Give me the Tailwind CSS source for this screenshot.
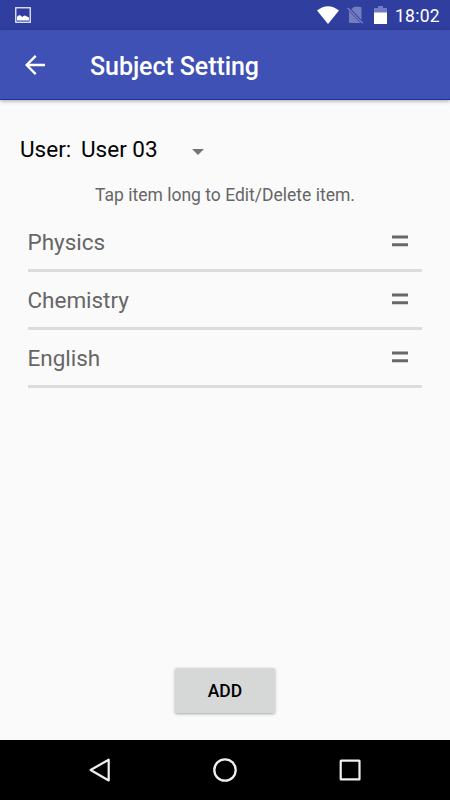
<!DOCTYPE html>
<html lang="en">
<head>
<meta charset="utf-8">
<title>Subject Setting</title>
<script src="https://cdn.jsdelivr.net/npm/@tailwindcss/browser@4"></script>
</head>
<body class="w-[450px] h-[800px] overflow-hidden bg-[#fafafa] font-[Roboto,sans-serif] flex flex-col">
  <div class="h-[30px] shrink-0 bg-[#303f9f] flex items-center text-white">
    <svg class="ml-[15px] w-4 h-4" viewBox="0 0 16 16"><rect x=".75" y=".75" width="14.5" height="14.5" fill="none" stroke="#fff" stroke-opacity=".9" stroke-width="1.3"/><path d="M2 13.500V10q1.500-2.500 3.500-1.500L7.500 10Q9 7.500 11 9l3 1.500v3z" fill="#fff"/></svg>
    <svg class="ml-auto w-[22px] h-[18px]" viewBox="0 0 22 18"><path d="M0 4.500Q11-4 22 4.500L11 18z" fill="#fff"/></svg>
    <svg class="ml-[8px] w-[17px] h-[18px]" viewBox="0 0 17 18"><path d="M4.300 3.300L7 .8h6q1.500 0 1.500 1.500v11.500zM2 5l11.500 12H3.500Q2 17 2 15.500z" fill="#fff" fill-opacity=".33"/><path d="M.7 2l15 15.200" stroke="#fff" stroke-opacity=".33" stroke-width="1.500"/></svg>
    <svg class="ml-[10px] w-[13px] h-[18px]" viewBox="0 0 13 18"><path d="M0 7V2h4V0h5v2h4v5z" fill="#fff" fill-opacity=".32"/><path d="M0 6.500h13V18H0z" fill="#fff"/></svg>
    <span class="ml-[8px] mr-[10px] w-[45px] whitespace-nowrap text-[17.5px] leading-[30px] pt-[2px] tracking-[0.25px]">18:02</span>
  </div>
  <div class="relative h-[70px] shrink-0 bg-[#3f51b5] border-b border-[#17319f] shadow-[0_1px_4px_rgba(0,0,0,0.35)] flex items-center text-white">
    <svg class="ml-[25px] w-5 h-5" viewBox="0 0 20 20"><path d="M20 10H2M10.700 .9L1.600 10l9.100 9.100" fill="none" stroke="#fff" stroke-width="2.400"/></svg>
    <h1 class="ml-[45px] pt-[5px] text-[25px] leading-[30px] font-medium tracking-[-0.07px]">Subject Setting</h1>
  </div>
  <main class="flex-1 flex flex-col">
    <div class="mt-[34px] ml-5 h-[30px] flex items-center text-[22.5px] leading-[30px] text-black">
      <span class="w-[61px]">User:</span>
      <span class="w-[110.5px]">User 03</span>
      <svg class="mt-[6px] w-3 h-[6px]" viewBox="0 0 12 6"><path d="M0 0h12L6 6z" fill="#757575"/></svg>
    </div>
    <p class="mt-[20px] h-[22px] text-center text-[17.5px] leading-[22px] text-[#666]">Tap item long to Edit/Delete item.</p>
    <ul class="mt-[8px] mx-[27.5px] w-[394.5px] text-[22.5px] tracking-[-0.03px] text-[#666]">
      <li class="h-[58px] border-b-3 border-[#dcdcdc] flex items-center justify-between"><span class="leading-[55px] pt-px">Physics</span><svg class="mr-[14px] mb-px w-4 h-3" viewBox="0 0 16 12"><path d="M0 2h16M0 9.700h16" stroke="#686868" stroke-width="3"/></svg></li>
      <li class="h-[58px] border-b-3 border-[#dcdcdc] flex items-center justify-between"><span class="leading-[55px] pt-px">Chemistry</span><svg class="mr-[14px] mb-px w-4 h-3" viewBox="0 0 16 12"><path d="M0 2h16M0 9.700h16" stroke="#686868" stroke-width="3"/></svg></li>
      <li class="h-[58px] border-b-3 border-[#dcdcdc] flex items-center justify-between"><span class="leading-[55px] pt-px">English</span><svg class="mr-[14px] mb-px w-4 h-3" viewBox="0 0 16 12"><path d="M0 2h16M0 9.700h16" stroke="#686868" stroke-width="3"/></svg></li>
    </ul>
    <button class="mt-auto mb-[27px] mx-auto w-[100px] h-[45px] rounded-[2px] bg-[#d6d7d7] shadow-[0_1px_3px_rgba(0,0,0,0.35)] pt-px text-[17.5px] leading-[45px] font-medium text-black">ADD</button>
  </main>
  <nav class="h-[60px] shrink-0 bg-black flex items-center justify-center gap-[101px]">
    <svg class="w-6 h-6" viewBox="0 0 24 24"><path d="M20.700 1.700v20.800L2.600 12z" fill="none" stroke="#f0f0f0" stroke-width="2.200" stroke-linejoin="round"/></svg>
    <svg class="w-6 h-6" viewBox="0 0 24 24"><circle cx="12" cy="12" r="10.700" fill="none" stroke="#f0f0f0" stroke-width="2.300"/></svg>
    <svg class="w-6 h-6" viewBox="0 0 24 24"><rect x="2.700" y="2.600" width="18.800" height="18.800" rx=".5" fill="none" stroke="#f0f0f0" stroke-width="2.200"/></svg>
  </nav>
</body>
</html>
